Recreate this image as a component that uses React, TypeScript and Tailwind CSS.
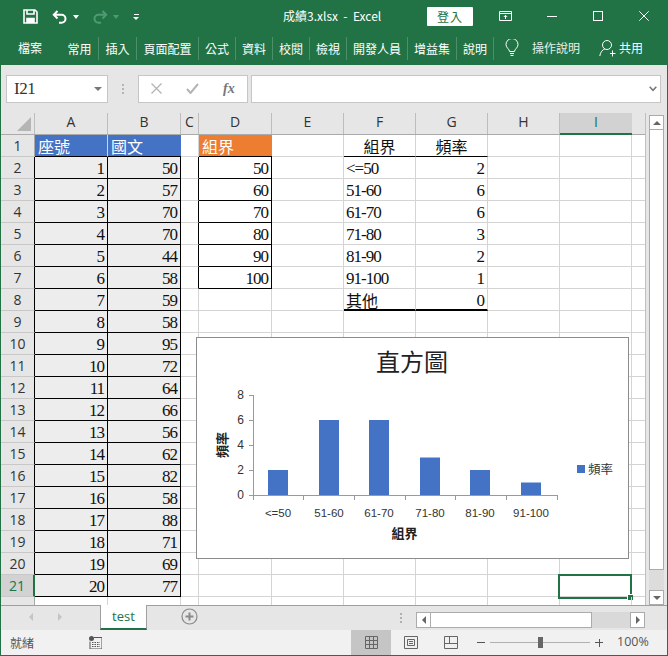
const tabs = [
  { label: "常用", w: "w-[38px]" },
  { label: "插入", w: "w-[38px]" },
  { label: "頁面配置", w: "w-[62px]" },
  { label: "公式", w: "w-[37px]" },
  { label: "資料", w: "w-[37px]" },
  { label: "校閱", w: "w-[37px]" },
  { label: "檢視", w: "w-[37px]" },
  { label: "開發人員", w: "w-[61px]" },
  { label: "增益集", w: "w-[49px]" },
  { label: "說明", w: "w-[37px]" },
];

const colHeads = [
  { label: "A", w: "w-[73px]" },
  { label: "B", w: "w-[73px]" },
  { label: "C", w: "w-[18px]" },
  { label: "D", w: "w-[73px]" },
  { label: "E", w: "w-[72px]" },
  { label: "F", w: "w-[72px]" },
  { label: "G", w: "w-[72px]" },
  { label: "H", w: "w-[72px]" },
];

const scores = [50, 57, 70, 70, 44, 58, 59, 58, 95, 72, 64, 66, 56, 62, 82, 58, 88, 71, 69, 77];
const bounds = [50, 60, 70, 80, 90, 100];
const freq: [string, number][] = [
  ["<=50", 2],
  ["51-60", 6],
  ["61-70", 6],
  ["71-80", 3],
  ["81-90", 2],
  ["91-100", 1],
  ["其他", 0],
];

const bars = [
  { x: 268, v: 2, label: "<=50" },
  { x: 319, v: 6, label: "51-60" },
  { x: 369, v: 6, label: "61-70" },
  { x: 420, v: 3, label: "71-80" },
  { x: 470, v: 2, label: "81-90" },
  { x: 521, v: 1, label: "91-100" },
];

const axisTicks = [253, 303, 354, 405, 455, 506, 557];

function Chart() {
  return (
    <div className="absolute left-[195px] top-[224px] w-[433px] h-[222px] bg-white border border-[#8c8c8c]">
      <svg viewBox="197 338 431 220" className="block w-[431px] h-[220px]">
        <text x="412" y="371" textAnchor="middle" fontSize="24" fill="#222">直方圖</text>
        <path d="M249 395.5h4.5M249 420.5h4.5M249 445.5h4.5M249 470.5h4.5M249 495.5h308M253.5 395v104" stroke="#9a9a9a" fill="none" />
        {axisTicks.map((x) => (
          <path key={x} d={`M${x + 0.5} 495v5`} stroke="#9a9a9a" />
        ))}
        {[8, 6, 4, 2, 0].map((n, i) => (
          <text key={n} x="244" y={399 + i * 25} textAnchor="end" fontSize="12" fill="#333" fontFamily="Liberation Sans">{n}</text>
        ))}
        {bars.map((b) => (
          <rect key={b.x} x={b.x} y={495 - b.v * 12.5} width="20" height={b.v * 12.5} fill="#4472c4" />
        ))}
        {bars.map((b) => (
          <text key={b.label} x={b.x + 10} y="517" textAnchor="middle" fontSize="11.5" fill="#333" fontFamily="Liberation Sans">{b.label}</text>
        ))}
        <text x="404.5" y="538" textAnchor="middle" fontSize="13" fontWeight="700" fill="#222">組界</text>
        <text transform="translate(227 445) rotate(-90)" textAnchor="middle" fontSize="13" fontWeight="700" fill="#222">頻率</text>
        <rect x="577" y="465" width="8" height="8" fill="#4472c4" />
        <text x="588" y="473.5" fontSize="12.5" fill="#333">頻率</text>
      </svg>
    </div>
  );
}

function TitleBar() {
  return (
    <div className="relative flex items-center h-[33px] bg-[#217346] text-white">
      <svg viewBox="0 0 15 15" className="ml-[22px] w-[15px] h-[15px]" fill="none" stroke="#fff" strokeWidth="1.6">
        <path d="M1 1h11l2 2v11H1z" />
        <path d="M4 1v4h7V1" />
        <path d="M4 14V9.5h7V14" fill="#fff" />
      </svg>
      <svg viewBox="0 0 16 14" className="ml-[14px] w-[16px] h-[14px]" fill="none" stroke="#fff" strokeWidth="2">
        <path d="M5.5 1L1.8 4.8l3.7 3.7M2 4.8h7.5a4 4 0 0 1 0 8H7" />
      </svg>
      <span className="ml-[5px] border-x-[3.5px] border-t-[4px] border-x-transparent border-t-white" />
      <svg viewBox="0 0 16 14" className="ml-[13px] w-[16px] h-[14px]" fill="none" stroke="#4f9a72" strokeWidth="2">
        <path d="M10.5 1l3.7 3.8-3.7 3.7M14 4.8H6.5a4 4 0 0 0 0 8H9" />
      </svg>
      <span className="ml-[5px] border-x-[3.5px] border-t-[4px] border-x-transparent border-t-[#4f9a72]" />
      <span className="ml-[14px] flex flex-col items-center gap-[2px]">
        <span className="w-[5px] h-px bg-white" />
        <span className="border-x-[3px] border-t-[3px] border-x-transparent border-t-white" />
      </span>
      <span className="absolute left-[282px] top-[8px] text-[12px] leading-[16px] whitespace-pre">成績3.xlsx  -  Excel</span>
      <span className="absolute left-[426px] top-[7px] w-[46px] h-[19px] bg-white rounded-[1px] text-[#217346] text-[12px] leading-[19px] text-center tracking-[1px]">登入</span>
      <svg viewBox="0 0 14 11" className="absolute left-[498px] top-[11px] w-[14px] h-[11px]" fill="none" stroke="#fff">
        <path d="M.5.5h12v9H.5zM.5 2.5h12M6.5 8V4.5M4.8 6l1.7-1.7L8.2 6" />
      </svg>
      <span className="absolute left-[546px] top-[16px] w-[10px] h-px bg-white" />
      <span className="absolute left-[592px] top-[11px] w-[10px] h-[10px] border border-white" />
      <svg viewBox="0 0 10 10" className="absolute left-[638px] top-[11px] w-[10px] h-[10px]" stroke="#fff" fill="none">
        <path d="M.3.3l9.4 9.4M9.7.3L.3 9.7" />
      </svg>
    </div>
  );
}

function RibbonTabs() {
  return (
    <div className="flex items-center h-[32px] bg-[#217346] text-white text-[12px] pb-[2px]">
      <span className="ml-[17px] w-[43px]">檔案</span>
      <div className="flex items-center">
        {tabs.map((t) => (
          <span key={t.label} className={`${t.w} h-[23px] leading-[23px] border-r border-[#4d8f6b] text-center whitespace-nowrap`}>
            {t.label}
          </span>
        ))}
      </div>
      <svg viewBox="0 0 14 18" className="ml-[11px] w-[14px] h-[18px]" fill="none" stroke="#fff">
        <path d="M4.5 12.5c0-2.5-3.5-3.5-3.5-7a6 6 0 0 1 12 0c0 3.5-3.5 4.5-3.5 7zM5 14.5h4M5.5 16.5h3" />
      </svg>
      <span className="ml-[13px] text-[#e6f0ea]">操作說明</span>
      <svg viewBox="0 0 17 18" className="ml-[19px] w-[17px] h-[18px]" fill="none" stroke="#fff">
        <circle cx="8" cy="6" r="4.5" />
        <path d="M.8 17c.5-4 3-6.5 5-7M11 14.5h5.5M13.5 11.5v6" />
      </svg>
      <span className="ml-[3px]">共用</span>
    </div>
  );
}

function FormulaBar() {
  return (
    <div className="flex items-center h-[48px] pl-[5px] pr-[6px] pb-[1px] bg-[#e6e6e6]">
      <div className="flex items-center justify-between w-[102px] h-[28px] bg-white border border-[#c6c6c6] pl-[7px] pr-[5px] text-[17px] tracking-[-0.5px] text-[#333] [font-family:'Liberation_Serif',serif]">
        I21
        <span className="border-x-[4px] border-t-[4px] border-x-transparent border-t-[#777]" />
      </div>
      <div className="flex flex-col gap-[2px] mx-[14px]">
        <span className="w-[2px] h-[2px] bg-[#b5b5b5]" />
        <span className="w-[2px] h-[2px] bg-[#b5b5b5]" />
        <span className="w-[2px] h-[2px] bg-[#b5b5b5]" />
      </div>
      <div className="flex items-center w-[110px] h-[28px] bg-white border border-[#c6c6c6]">
        <svg viewBox="0 0 11 11" className="ml-[12px] w-[11px] h-[11px]" fill="none" stroke="#b4b4b4" strokeWidth="1.3">
          <path d="M.5.5l10 10M10.5.5l-10 10" />
        </svg>
        <svg viewBox="0 0 13 11" className="ml-[24px] w-[13px] h-[11px]" fill="none" stroke="#b4b4b4" strokeWidth="2">
          <path d="M1 6l3.5 4L12 1" />
        </svg>
        <span className="ml-[24px] text-[14px] italic font-bold text-[#777] [font-family:'Liberation_Serif',serif]">fx</span>
      </div>
      <div className="flex items-center justify-end ml-[3px] flex-1 h-[28px] bg-white border border-[#c6c6c6] pr-[3px]">
        <svg viewBox="0 0 8 6" className="w-[8px] h-[6px]" fill="none" stroke="#777" strokeWidth="1.5">
          <path d="M.7.7L4 4.3 7.3.7" />
        </svg>
      </div>
    </div>
  );
}

function ColumnHeader() {
  return (
    <div className="flex h-[22px] bg-[#e6e6e6] border-b border-[#ababab] text-[14px] leading-[15px] text-[#333] [font-family:'Open_Sans',sans-serif]">
      <div className="relative w-[34px] border-r border-[#bdbdbd]">
        <svg viewBox="0 0 14 14" className="absolute left-[16px] top-[4px] w-[14px] h-[14px]">
          <path d="M14 0v14H0z" fill="#b5b5b5" />
        </svg>
      </div>
      {colHeads.map((c) => (
        <div key={c.label} className={`${c.w} border-r border-[#bdbdbd] text-center pt-[1px]`}>{c.label}</div>
      ))}
      <div className="w-[72px] -mb-px bg-[#d2d2d2] border-b-2 border-[#217346] text-center text-[#217346] pt-[1px]">I</div>
    </div>
  );
}

const line = "border-[#d4d4d4]";
// digits in the reference are narrower and taller than the serif at 16px
const numText = "text-[17px] tracking-[-1px]";
const numCell = `pl-[2px] pr-[3px] text-right ${numText}`;
const cjkText = "leading-[25px]";

function Row({ n }: { n: number }) {
  const score = n >= 2 && n <= 21;
  const bound = n >= 2 && n <= 7;
  const hasFreq = n >= 2 && n <= 8;
  const f = hasFreq ? freq[n - 2] : null;
  const selected = n === 21;
  return (
    <div className="flex h-[22px] leading-[23px]">
      <div
        className={`w-[34px] shrink-0 text-center text-[14px] leading-[22px] [font-family:'Open_Sans',sans-serif] ${
          selected
            ? "bg-[#d2d2d2] text-[#217346] border-r-2 border-[#217346]"
            : score
              ? "bg-[#e6e6e6] text-[#333] border-r border-black"
              : "bg-[#e6e6e6] text-[#333] border-r border-[#a9a9a9]"
        } ${n === 22 ? "" : "border-b border-b-[#c8c8c8]"}`}
      >
        {n === 22 ? "" : n}
      </div>
      <div className={`w-[73px] shrink-0 ${n === 1 ? `bg-[#4472c4] text-white px-[3px] border-r border-r-[#d4d4d4] border-b border-b-black ${cjkText}` : score ? `bg-[#ededed] border-r border-b border-black ${numCell}` : `border-r border-b ${line}`}`}>
        {n === 1 ? "座號" : score ? n - 1 : ""}
      </div>
      <div className={`w-[73px] shrink-0 ${n === 1 ? `bg-[#4472c4] text-white px-[3px] border-b border-b-black ${cjkText}` : score ? `bg-[#ededed] border-r border-b border-black ${numCell}` : `border-r border-b ${line}`}`}>
        {n === 1 ? "國文" : score ? scores[n - 2] : ""}
      </div>
      <div className={`w-[18px] shrink-0 border-b ${line} border-r ${bound ? "border-r-black" : ""}`} />
      <div className={`w-[73px] shrink-0 ${n === 1 ? `bg-[#ed7d31] text-white px-[3px] border-b border-b-black ${cjkText}` : bound ? `border-r border-b border-black ${numCell}` : `border-r border-b ${line}`}`}>
        {n === 1 ? "組界" : bound ? bounds[n - 2] : ""}
      </div>
      <div className={`w-[72px] shrink-0 border-r border-b ${line}`} />
      <div className={`w-[72px] shrink-0 border-r ${line} ${n === 1 ? `border-b border-b-black text-center ${cjkText}` : n === 8 ? `border-b-2 border-b-black px-[2px] ${cjkText}` : `border-b px-[2px] ${numText}`}`}>
        {n === 1 ? "組界" : f ? f[0] : ""}
      </div>
      <div className={`w-[72px] shrink-0 border-r ${line} ${n === 1 ? `border-b border-b-black text-center ${cjkText}` : n === 8 ? `border-b-2 border-b-black ${numCell}` : `border-b ${numCell}`}`}>
        {n === 1 ? "頻率" : f ? f[1] : ""}
      </div>
      <div className={`w-[72px] shrink-0 border-r border-b ${line}`} />
      <div className={`relative w-[72px] shrink-0 border-r border-b ${line}`}>
        {selected && (
          <div className="absolute -left-[2px] -top-[1px] w-[74px] h-[25px] border-2 border-[#217346]">
            <span className="absolute -right-[3px] -bottom-[3px] w-[6px] h-[6px] bg-[#217346] border-l border-t border-white" />
          </div>
        )}
      </div>
      <div className={`flex-1 border-b ${line}`} />
    </div>
  );
}

function Sheet() {
  const rows = Array.from({ length: 22 }, (_, i) => i + 1);
  return (
    <div className="flex h-[493px] bg-[#e6e6e6] border-b border-[#9f9f9f]">
      <div className="relative w-[645px] h-[492px] bg-white overflow-hidden border-r border-[#c0c0c0] text-[16px] text-[#111] [font-family:'Liberation_Serif','Noto_Sans_CJK_TC',serif]">
        <ColumnHeader />
        {rows.map((n) => (
          <Row key={n} n={n} />
        ))}
        <Chart />
      </div>
      <div className="flex flex-col w-[15px] ml-[3px] mt-[2px] bg-[#dcdcdc]">
        <div className="flex items-center justify-center h-[15px] bg-white border border-[#ababab]">
          <span className="border-x-[4px] border-b-[4px] border-x-transparent border-b-[#666]" />
        </div>
        <div className="h-[440px] bg-white border-x border-b border-[#ababab]" />
        <div className="flex-1" />
        <div className="flex items-center justify-center h-[15px] bg-white border border-[#ababab]">
          <span className="border-x-[4px] border-t-[4px] border-x-transparent border-t-[#666]" />
        </div>
      </div>
    </div>
  );
}

function TabBar() {
  return (
    <div className="flex h-[24px] bg-[#e6e6e6]">
      <span className="ml-[28px] mt-[7px] h-0 border-y-[4px] border-r-[4px] border-y-transparent border-r-[#c4c4c4]" />
      <span className="ml-[25px] mt-[7px] h-0 border-y-[4px] border-l-[4px] border-y-transparent border-l-[#c4c4c4]" />
      <div className="ml-[38px] -mt-px w-[47px] h-[25px] bg-white border-x border-[#9f9f9f] border-b-2 border-b-[#217346] text-center text-[13px] leading-[22px] text-[#217346] [font-family:'Open_Sans',sans-serif]">
        test
      </div>
      <svg viewBox="0 0 17 17" className="ml-[34px] mt-[2px] w-[17px] h-[17px]" fill="none" stroke="#8a8a8a">
        <circle cx="8.5" cy="8.5" r="7.5" strokeWidth="1.2" />
        <path d="M8.5 4.5v8M4.5 8.5h8" strokeWidth="2" />
      </svg>
      <div className="flex flex-col gap-[2px] ml-[202px] mt-[7px]">
        <span className="w-[2px] h-[2px] bg-[#b0b0b0]" />
        <span className="w-[2px] h-[2px] bg-[#b0b0b0]" />
        <span className="w-[2px] h-[2px] bg-[#b0b0b0]" />
      </div>
      <div className="flex ml-[14px] mt-[6px] w-[229px] h-[16px] bg-[#d9d9d9]">
        <div className="flex items-center justify-center w-[15px] bg-white border border-[#ababab]">
          <span className="border-y-[4px] border-r-[4px] border-y-transparent border-r-[#666]" />
        </div>
        <div className="w-[161px] bg-white border-y border-r border-[#ababab]" />
        <div className="flex-1" />
        <div className="flex items-center justify-center w-[15px] bg-white border border-[#ababab]">
          <span className="border-y-[4px] border-l-[4px] border-y-transparent border-l-[#666]" />
        </div>
      </div>
    </div>
  );
}

function StatusBar() {
  return (
    <div className="flex items-center flex-1 bg-[#f1f1f1] text-[12px] text-[#555]">
      <span className="ml-[9px]">就緒</span>
      <svg viewBox="0 0 13 13" className="ml-[55px] w-[13px] h-[13px]" fill="none">
        <circle cx="2.5" cy="2.5" r="2.5" fill="#555" />
        <path d="M5 1.5h8V13H1V5.5" stroke="#555" />
        <path d="M3 6.5h8M3 8.5h8M3 10.5h8" stroke="#555" strokeDasharray="1.5 1" />
      </svg>
      <div className="flex items-center justify-center ml-[249px] w-[40px] h-[25px] bg-[#c5c5c5]">
        <svg viewBox="0 0 13 13" className="w-[13px] h-[13px]" fill="none" stroke="#666">
          <path d="M.5.5h12v12H.5zM.5 4.5h12M.5 8.5h12M4.5.5v12M8.5.5v12" />
        </svg>
      </div>
      <svg viewBox="0 0 14 13" className="ml-[13px] w-[14px] h-[13px]" fill="none" stroke="#666">
        <path d="M.5.5h13v12H.5zM3.5 3.5h7v6h-7zM5 5.5h4M5 7.5h4" />
      </svg>
      <svg viewBox="0 0 14 13" className="ml-[26px] w-[14px] h-[13px]" fill="none" stroke="#666">
        <path d="M.5.5h13v12H.5zM.5 7.5h13M5.5.5v7" />
      </svg>
      <span className="ml-[19px] w-[8px] h-px bg-[#555]" />
      <div className="relative flex items-center ml-[5px] w-[100px] h-[12px]">
        <span className="w-full h-px bg-[#b0b0b0]" />
        <span className="absolute left-[48px] w-[5px] h-[11px] bg-[#666]" />
      </div>
      <span className="relative ml-[5px] w-[8px] h-[8px]">
        <span className="absolute top-[3.5px] w-[8px] h-px bg-[#555]" />
        <span className="absolute left-[3.5px] w-px h-[8px] bg-[#555]" />
      </span>
      <span className="ml-[14px] text-[12.5px] [font-family:'Open_Sans',sans-serif]">100%</span>
    </div>
  );
}

export default function App() {
  return (
    <div className="flex flex-col w-[668px] h-[656px] border-x border-b border-[#217346] bg-[#f1f1f1] overflow-hidden [font-family:'Noto_Sans_CJK_TC','Noto_Sans',sans-serif]">
      <TitleBar />
      <RibbonTabs />
      <FormulaBar />
      <Sheet />
      <TabBar />
      <StatusBar />
    </div>
  );
}
